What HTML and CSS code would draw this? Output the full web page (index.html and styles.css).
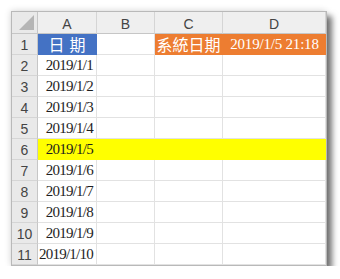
FILE: index.html
```html
<!DOCTYPE html>
<html lang="zh-Hant">
<head>
<meta charset="utf-8">
<title>系統日期</title>
<link rel="stylesheet" href="styles.css">
</head>
<body>
<div class="sheet">
  <div class="hd corner"><span class="tri"></span></div>
  <div class="hd col">A</div>
  <div class="hd col">B</div>
  <div class="hd col">C</div>
  <div class="hd col">D</div>

  <div class="hd row">1</div>
  <div class="c blue cjk wide">日期</div>
  <div class="c"></div>
  <div class="c orange cjk">系統日期</div>
  <div class="c orange center stamp">2019/1/5 21:18</div>

  <div class="hd row">2</div><div class="c r">2019/1/1</div><div class="c"></div><div class="c"></div><div class="c"></div>
  <div class="hd row">3</div><div class="c r">2019/1/2</div><div class="c"></div><div class="c"></div><div class="c"></div>
  <div class="hd row">4</div><div class="c r">2019/1/3</div><div class="c"></div><div class="c"></div><div class="c"></div>
  <div class="hd row">5</div><div class="c r">2019/1/4</div><div class="c"></div><div class="c"></div><div class="c"></div>
  <div class="hd row">6</div><div class="c r yellow">2019/1/5</div><div class="c yellow"></div><div class="c yellow"></div><div class="c yellow"></div>
  <div class="hd row">7</div><div class="c r">2019/1/6</div><div class="c"></div><div class="c"></div><div class="c"></div>
  <div class="hd row">8</div><div class="c r">2019/1/7</div><div class="c"></div><div class="c"></div><div class="c"></div>
  <div class="hd row">9</div><div class="c r">2019/1/8</div><div class="c"></div><div class="c"></div><div class="c"></div>
  <div class="hd row">10</div><div class="c r">2019/1/9</div><div class="c"></div><div class="c"></div><div class="c"></div>
  <div class="hd row">11</div><div class="c r">2019/1/10</div><div class="c"></div><div class="c"></div><div class="c"></div>
</div>
</body>
</html>
```

FILE: styles.css
```css
html, body {
  margin: 0;
  background: #ffffff;
}

body {
  padding: 11px 0 0 11px;
}

.sheet {
  display: grid;
  grid-template-columns: 26px 59px 58px 68px 103px;
  grid-template-rows: 22px repeat(11, 21px);
  width: max-content;
  border: 1px solid #b9b9b9;
  background: #ffffff;
  box-shadow: 5px 5px 6px rgba(0, 0, 0, 0.55), -1px -1px 6px rgba(0, 0, 0, 0.12);
}

.hd {
  box-sizing: border-box;
  background: #efefef;
  border-right: 1px solid #d5d5d5;
  border-bottom: 1px solid #d5d5d5;
  color: #444444;
  font: 14px "Liberation Sans", "Open Sans", sans-serif;
  display: flex;
  align-items: center;
  justify-content: center;
}

.hd.row {
  background: #e9e9e9;
  border-right-color: #c6c6c6;
  padding-top: 1px;
}

.hd.col {
  border-bottom-color: #c6c6c6;
  padding-top: 2px;
}

.corner {
  position: relative;
  background: #e9e9e9;
  border-bottom-color: #c6c6c6;
  border-right-color: #c6c6c6;
}

.tri {
  position: absolute;
  right: 3px;
  bottom: 3px;
  width: 0;
  height: 0;
  border-left: 15px solid transparent;
  border-bottom: 15px solid #b5b5b5;
}

.c {
  box-sizing: border-box;
  border-right: 1px solid #e2e2e2;
  border-bottom: 1px solid #e2e2e2;
  color: #1e1e1e;
  font: 15px "Liberation Serif", "Times New Roman", serif;
  letter-spacing: -0.75px;
  display: flex;
  align-items: flex-end;
  padding: 0 3px 1px 2px;
  white-space: nowrap;
}

.c.r {
  justify-content: flex-end;
}

.c.center {
  justify-content: center;
}

.stamp {
  letter-spacing: -0.2px;
  padding-left: 4px;
}

.cjk {
  justify-content: center;
  font: 16px "Noto Sans CJK TC", "Noto Sans CJK SC", sans-serif;
  align-items: center;
  padding: 0;
  letter-spacing: 0;
}

.cjk.wide {
  letter-spacing: 5px;
  padding-left: 5px;
}

.blue {
  background: #4472c4;
  border-color: #4472c4;
  color: #ffffff;
}

.orange {
  background: #ed7d31;
  border-color: #ed7d31;
  color: #ffffff;
}

.yellow {
  background: #ffff00;
  border-color: #ffff00;
}
```
